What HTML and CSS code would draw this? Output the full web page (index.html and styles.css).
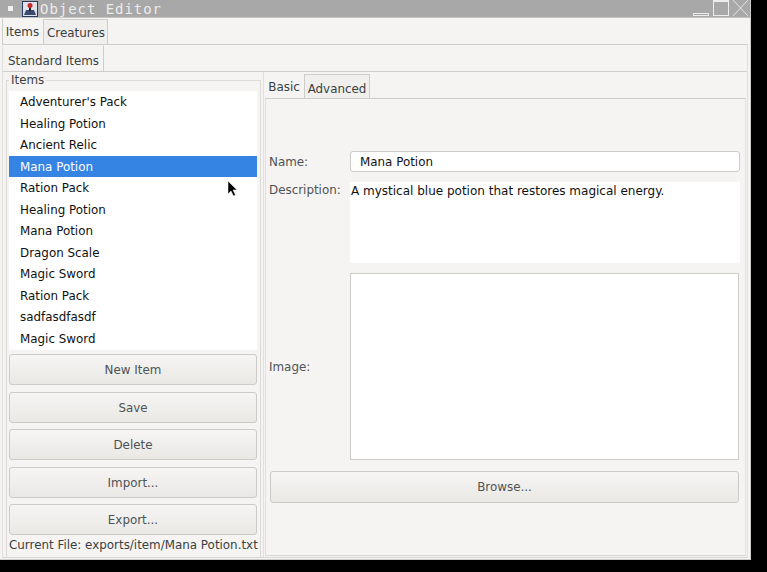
FILE: index.html
```html
<!DOCTYPE html>
<html lang="en">

<head>
  <meta charset="UTF-8">
  <meta name="viewport" content="width=device-width, initial-scale=1.0">
  <title>Object Editor</title>
  <link rel="stylesheet" href="styles.css">
</head>

<body>
  <div class="window">
    <div class="titlebar">
      <span class="menu-dot"></span>
      <svg class="app-icon" width="16" height="16" viewBox="0 0 16 16">
        <rect x="0.5" y="0.5" width="15" height="15" fill="#dfe2e8" stroke="#2b3a63"/>
        <path d="M2 14l2-5h8l2 5z" fill="#3a4a72"/>
        <rect x="7" y="6" width="2" height="4" fill="#222"/>
        <circle cx="8" cy="4.500" r="2.500" fill="#c8282a"/>
      </svg>
      <span class="title-text">Object Editor</span>
      <div class="title-buttons">
        <span class="btn-min"></span>
        <span class="btn-max"></span>
        <svg class="btn-close" width="17" height="17" viewBox="0 0 17 17">
          <path d="M1 0l15 16M16 0L1 16" stroke="#e4e4e4" stroke-width="1" fill="none"/>
        </svg>
      </div>
    </div>

    <div class="tabs top-tabs">
      <div class="tab active">Items</div>
      <div class="tab">Creatures</div>
    </div>

    <div class="main-pane">
      <div class="tabs sub-tabs">
        <div class="tab active">Standard Items</div>
      </div>

      <div class="sub-pane">
        <div class="left">
          <div class="group">
            <span class="legend">Items</span>
            <ul class="list">
              <li>Adventurer's Pack</li>
              <li>Healing Potion</li>
              <li>Ancient Relic</li>
              <li class="selected">Mana Potion</li>
              <li>Ration Pack</li>
              <li>Healing Potion</li>
              <li>Mana Potion</li>
              <li>Dragon Scale</li>
              <li>Magic Sword</li>
              <li>Ration Pack</li>
              <li>sadfasdfasdf</li>
              <li>Magic Sword</li>
            </ul>
            <div class="buttons">
              <button class="btn">New Item</button>
              <button class="btn">Save</button>
              <button class="btn">Delete</button>
              <button class="btn">Import...</button>
              <button class="btn">Export...</button>
            </div>
            <div class="current-file">Current File: exports/item/Mana Potion.txt</div>
          </div>
        </div>

        <div class="right">
          <div class="tabs detail-tabs">
            <div class="tab active">Basic</div>
            <div class="tab">Advanced</div>
          </div>
          <div class="detail-pane">
            <div class="row name-row">
              <label>Name:</label>
              <div class="name-input">Mana Potion</div>
            </div>
            <div class="row desc-row">
              <label>Description:</label>
              <div class="desc-box">A mystical blue potion that restores magical energy.</div>
            </div>
            <div class="row image-row">
              <label>Image:</label>
              <div class="image-box"></div>
            </div>
            <button class="btn browse">Browse...</button>
          </div>
        </div>
      </div>
    </div>
  </div>

  <svg class="cursor" width="11" height="16" viewBox="0 0 11 16">
    <path d="M1 0v13l3-3 2.500 5 2-1-2.500-5h4z" fill="#000" stroke="#fff" stroke-width="0.5"/>
  </svg>
</body>

</html>
```

FILE: styles.css
```css
html,
body {
  margin: 0;
  height: 100%;
  background-color: #000;
}

body {
  width: 767px;
  height: 572px;
  overflow: hidden;
  font-family: "DejaVu Sans", sans-serif;
  font-size: 11.9px;
  color: #3a3f41;
}

.window {
  width: 751px;
  height: 560px;
  background-color: #f5f4f2;
  display: flex;
  flex-direction: column;
  box-sizing: border-box;
  border-right: 1px solid #cfcdc9;
  border-bottom: 1px solid #cfcdc9;
}

/* title bar */
.titlebar {
  height: 17px;
  flex: none;
  background-color: #a8a8a8;
  display: flex;
  align-items: center;
  border-bottom: 1px solid #c4c4c4;
}

.menu-dot {
  width: 5px;
  height: 5px;
  background-color: #f0f0f0;
  margin-left: 8px;
}

.app-icon {
  margin-left: 9px;
}

.title-text {
  font-family: "DejaVu Sans Mono", monospace;
  font-size: 14px;
  letter-spacing: 0.95px;
  color: #ececec;
  margin-left: 2px;
}

.title-buttons {
  margin-left: auto;
  display: flex;
  align-items: flex-start;
  height: 17px;
}

.btn-min {
  width: 14px;
  height: 1px;
  border: 1px solid #ececec;
  margin: 13px 4px 0 0;
}

.btn-max {
  width: 14px;
  height: 13px;
  border: 1px solid #ececec;
  border-top-width: 2px;
  margin-right: 3px;
}

.btn-close {
  margin-right: 1px;
}

/* tabs */
.tabs {
  display: flex;
  flex: none;
  align-items: flex-end;
}

.tab {
  box-sizing: border-box;
  border: 1px solid #cfcdc9;
  border-bottom: none;
  background-color: #f0efed;
  text-align: center;
}

.tab.active {
  background-color: #f5f4f2;
  border-color: transparent;
  border-left-color: #cfcdc9;
}

.top-tabs {
  height: 26px;
  padding-left: 2px;
}

.top-tabs .tab {
  height: 25px;
  line-height: 27px;
  width: 65px;
  padding-left: 1px;
}

.top-tabs .tab.active {
  height: 26px;
  line-height: 26px;
  width: 41px;
  padding-left: 0;
}

.main-pane {
  flex: 1;
  margin: 0 2px 1px 2px;
  border-top: 1px solid #cfcdc9;
  border-left: 1px solid #e2e0dc;
  border-right: 1px solid #e2e0dc;
  border-bottom: 1px solid #d8d6d2;
  display: flex;
  flex-direction: column;
}

.sub-tabs {
  height: 26px;
}

.sub-tabs .tab.active {
  width: 101px;
  height: 26px;
  line-height: 30px;
  border-left-color: transparent;
  border-right-color: #cfcdc9;
}

.sub-pane {
  flex: 1;
  border-top: 1px solid #cfcdc9;
  display: flex;
  min-height: 0;
}

/* left column */
.left {
  width: 260px;
  flex: none;
  box-sizing: border-box;
  padding: 8px 2px 0 3px;
  display: flex;
}

.group {
  position: relative;
  flex: 1;
  min-width: 0;
  border: 1px solid #dcdad6;
  border-bottom: none;
  padding: 10px 3px 0 2px;
  display: flex;
  flex-direction: column;
}

.legend {
  position: absolute;
  left: 2px;
  top: -8px;
  padding: 0 2px;
  line-height: 14px;
  background-color: #f5f4f2;
}

.list {
  list-style: none;
  margin: 0;
  padding: 0;
  height: 259px;
  background-color: #fff;
  color: #111;
}

.list li {
  height: 21.5px;
  line-height: 23.5px;
  padding-left: 11px;
}

.list li.selected {
  background-color: #3584e4;
  color: #fff;
}

.buttons {
  display: flex;
  flex-direction: column;
  gap: 6.5px;
  margin-top: 4px;
}

.btn {
  box-sizing: border-box;
  height: 31px;
  padding: 1px 0 0 0;
  font-family: inherit;
  font-size: 11.9px;
  color: #4e5355;
  border: 1px solid #cdcbc7;
  border-radius: 3px;
  background: linear-gradient(#f6f5f3, #e9e8e5);
}

.current-file {
  margin-top: 2px;
  white-space: nowrap;
  line-height: 16px;
}

/* right column */
.right {
  flex: 1;
  min-width: 0;
  box-sizing: border-box;
  padding: 1px;
  border-left: 1px solid #e2e0dc;
  display: flex;
  flex-direction: column;
}

.detail-tabs {
  height: 25px;
  padding-left: 1px;
}

.detail-tabs .tab {
  height: 24px;
  line-height: 28px;
  width: 66px;
}

.detail-tabs .tab.active {
  width: 38px;
  height: 25px;
  line-height: 26px;
  padding-right: 2px;
  border-color: transparent;
}

.detail-pane {
  flex: 1;
  border-top: 1px solid #cfcdc9;
  border-left: 1px solid #e2e0dc;
  border-right: 1px solid #e2e0dc;
  border-bottom: 1px solid #d8d6d2;
  padding: 52px 5px 0 3px;
  display: flex;
  flex-direction: column;
}

.row {
  display: flex;
}

.row label {
  width: 81px;
  flex: none;
  color: #4e5355;
}

.name-row {
  align-items: center;
  height: 21px;
}

.name-input {
  flex: 1;
  box-sizing: border-box;
  height: 21px;
  line-height: 20px;
  padding-left: 9px;
  border: 1px solid #cdcbc7;
  border-radius: 3px;
  background-color: #fff;
  color: #111;
}

.desc-row {
  margin-top: 10px;
  height: 81px;
}

.desc-row label {
  line-height: 16px;
}

.desc-box {
  flex: 1;
  height: 81px;
  line-height: 18px;
  padding-left: 1px;
  font-size: 12px;
  background-color: #fff;
  color: #111;
}

.image-row {
  margin-top: 10px;
  height: 187px;
  align-items: center;
}

.image-box {
  flex: 1;
  box-sizing: border-box;
  height: 187px;
  margin-right: 1px;
  border: 1px solid #cdcbc7;
  background-color: #fff;
}

.browse {
  margin: 11px 1px 0 1px;
  height: 32px;
  padding-top: 0;
}

.cursor {
  position: absolute;
  left: 227px;
  top: 181px;
}
```
